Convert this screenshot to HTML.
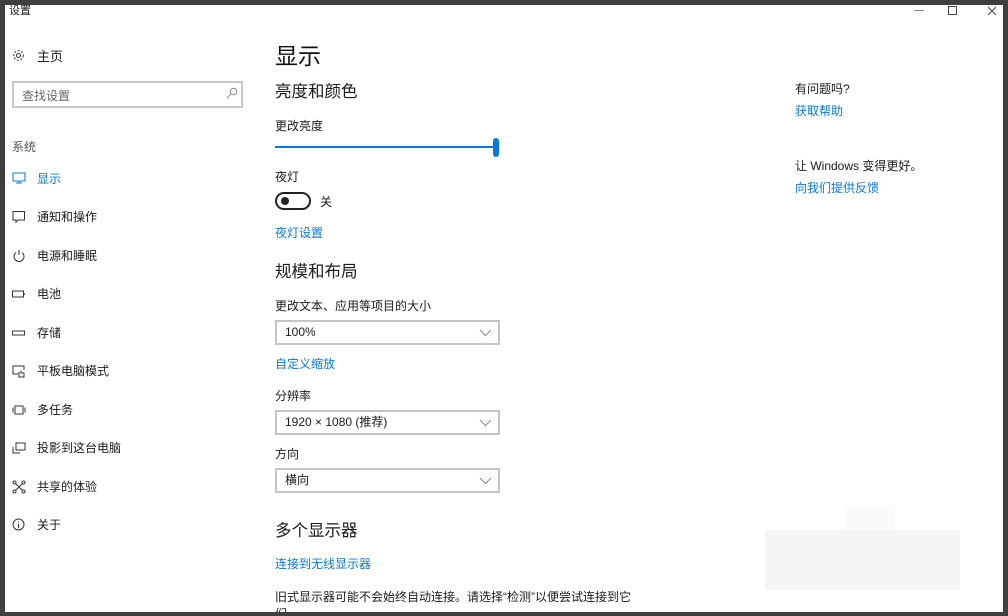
<!DOCTYPE html>
<html><head><meta charset="utf-8"><style>
*{margin:0;padding:0;box-sizing:border-box}
body{width:1008px;height:616px;background:#3f3f3f;position:relative;overflow:hidden;font-family:"Liberation Sans","Noto Sans CJK SC",sans-serif;color:#1a1a1a;line-height:1.2}
#win{position:absolute;left:5px;top:5px;width:998px;height:607px;background:#fff;overflow:hidden}
.a{position:absolute;white-space:nowrap}
.t{font-size:12px;margin-top:2px}
.h{margin-top:2px}
.blue{color:#0a78d7}
.nav{position:absolute;left:7px;font-size:12px}
.nav svg{position:absolute;left:0;top:2px}
.nav span{position:absolute;left:25px;top:2px;white-space:nowrap}
.dd{position:absolute;left:270px;width:225px;height:25px;border:2px solid #c4c4c4;font-size:12px;padding:0 8px;line-height:21px}
.dd svg{position:absolute;right:6px;top:7px}
</style></head><body>
<div id="win">
<div class="a" style="left:4px;top:0px;font-size:11px">设置</div>
<div class="a" style="left:909px;top:5px;width:10px;height:1px;background:#888"></div>
<div class="a" style="left:943px;top:1px;width:9px;height:9px;border:1px solid #444"></div>
<svg class="a" style="left:982px;top:1px" width="10" height="10"><path d="M1 1L9 9M9 1L1 9" stroke="#444" stroke-width="1"/></svg>

<svg class="a" style="left:7px;top:44px" width="13" height="13" viewBox="0 0 13 13"><circle cx="6.5" cy="6.5" r="2" fill="none" stroke="#333"/><circle cx="6.5" cy="6.5" r="4.8" fill="none" stroke="#333" stroke-dasharray="2 1.6"/></svg>
<div class="a h" style="left:32px;top:42px;font-size:13px">主页</div>
<div class="a" style="left:7px;top:76px;width:231px;height:27px;border:2px solid #c8c8c8"></div>
<div class="a t" style="left:17px;top:82px;color:#666">查找设置</div>
<svg class="a" style="left:221px;top:82px" width="12" height="12"><circle cx="7.5" cy="4.5" r="3.3" fill="none" stroke="#888"/><path d="M5 7L1 11" stroke="#888"/></svg>
<div class="a t" style="left:7px;top:133px;color:#555">系统</div>

<div class="nav" style="top:165px;color:#0a78d7"><svg width="14" height="14"><rect x="1" y="1" width="12" height="8" fill="none" stroke="#0a78d7"/><path d="M4 11H10M7 9V11" stroke="#0a78d7"/></svg><span>显示</span></div>
<div class="nav" style="top:203px"><svg width="14" height="14"><path d="M1 1.5H12.5V10H6L4 12V10H1Z" fill="none" stroke="#333"/></svg><span>通知和操作</span></div>
<div class="nav" style="top:242px"><svg width="14" height="14"><path d="M4 3.5A5 5 0 1 0 10 3.5" fill="none" stroke="#333"/><path d="M7 1V6" stroke="#333"/></svg><span>电源和睡眠</span></div>
<div class="nav" style="top:280px"><svg width="14" height="14"><rect x="0.5" y="4" width="11" height="6" fill="none" stroke="#333"/><path d="M12 6V8" stroke="#333" stroke-width="1.5"/></svg><span>电池</span></div>
<div class="nav" style="top:319px"><svg width="14" height="14"><rect x="0.5" y="5" width="12" height="4" fill="none" stroke="#333"/></svg><span>存储</span></div>
<div class="nav" style="top:357px"><svg width="14" height="14"><path d="M6 10H1V2H12V6" fill="none" stroke="#333"/><path d="M7 8V13H12V9H9V6.5" fill="none" stroke="#333"/></svg><span>平板电脑模式</span></div>
<div class="nav" style="top:396px"><svg width="14" height="14"><rect x="3" y="3" width="8" height="8" fill="none" stroke="#333"/><path d="M1 4.5V9.5M13 4.5V9.5" stroke="#333"/></svg><span>多任务</span></div>
<div class="nav" style="top:434px"><svg width="14" height="14"><rect x="4" y="2" width="9" height="7" fill="none" stroke="#333"/><path d="M1 6V12H8" fill="none" stroke="#333"/></svg><span>投影到这台电脑</span></div>
<div class="nav" style="top:473px"><svg width="14" height="14"><circle cx="2.5" cy="2.5" r="1.5" fill="none" stroke="#333"/><circle cx="11.5" cy="2.5" r="1.5" fill="none" stroke="#333"/><circle cx="2.5" cy="11.5" r="1.5" fill="none" stroke="#333"/><circle cx="11.5" cy="11.5" r="1.5" fill="none" stroke="#333"/><path d="M4 4L10 10M10 4L4 10" stroke="#333"/></svg><span>共享的体验</span></div>
<div class="nav" style="top:511px"><svg width="14" height="14"><circle cx="6.5" cy="6.5" r="5.5" fill="none" stroke="#333"/><path d="M6.5 6V10M6.5 3.5V4.5" stroke="#333"/></svg><span>关于</span></div>

<div class="a h" style="left:270px;top:36px;font-size:23px;color:#111">显示</div>
<div class="a h" style="left:270px;top:76px;font-size:16.5px">亮度和颜色</div>
<div class="a t" style="left:270px;top:112px">更改亮度</div>
<div class="a" style="left:270px;top:141px;width:222px;height:2px;background:#0a78d7"></div>
<div class="a" style="left:488px;top:133px;width:6px;height:19px;border-radius:3px;background:#0a78d7"></div>
<div class="a t" style="left:270px;top:163px">夜灯</div>
<div class="a" style="left:270px;top:187px;width:36px;height:18px;border:2px solid #222;border-radius:9px"></div>
<div class="a" style="left:276px;top:192px;width:8px;height:8px;border-radius:50%;background:#222"></div>
<div class="a t" style="left:315px;top:188px">关</div>
<div class="a t blue" style="left:270px;top:219px">夜灯设置</div>

<div class="a h" style="left:270px;top:256px;font-size:16.5px">规模和布局</div>
<div class="a t" style="left:270px;top:292px">更改文本、应用等项目的大小</div>
<div class="dd" style="top:315px">100%<svg width="13" height="8"><path d="M1 1L6.5 6.5L12 1" fill="none" stroke="#888"/></svg></div>
<div class="a t blue" style="left:270px;top:350px">自定义缩放</div>
<div class="a t" style="left:270px;top:382px">分辨率</div>
<div class="dd" style="top:405px">1920 × 1080 (推荐)<svg width="13" height="8"><path d="M1 1L6.5 6.5L12 1" fill="none" stroke="#888"/></svg></div>
<div class="a t" style="left:270px;top:440px">方向</div>
<div class="dd" style="top:463px">横向<svg width="13" height="8"><path d="M1 1L6.5 6.5L12 1" fill="none" stroke="#888"/></svg></div>
<div class="a h" style="left:270px;top:515px;font-size:16.5px">多个显示器</div>
<div class="a t blue" style="left:270px;top:550px">连接到无线显示器</div>
<div class="a t" style="left:270px;top:583px">旧式显示器可能不会始终自动连接。请选择“检测”以便尝试连接到它</div>
<div class="a t" style="left:270px;top:600px">们</div>

<div class="a t" style="left:790px;top:75px">有问题吗?</div>
<div class="a t blue" style="left:790px;top:97px">获取帮助</div>
<div class="a t" style="left:790px;top:152px">让 Windows 变得更好。</div>
<div class="a t blue" style="left:790px;top:174px">向我们提供反馈</div>

<div class="a" style="left:760px;top:525px;width:195px;height:60px;background:#f5f5f5"></div>
<div class="a" style="left:840px;top:500px;width:50px;height:25px;background:#fafafa"></div>
</div>
</body></html>
